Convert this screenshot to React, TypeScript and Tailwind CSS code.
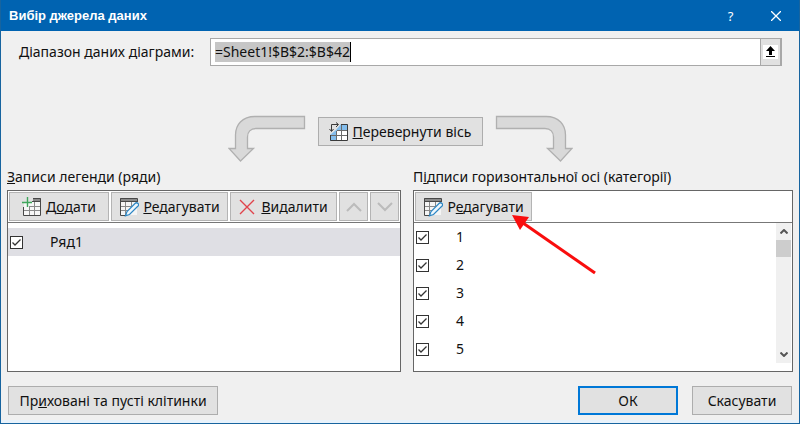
import { useEffect, useRef, type ReactNode } from "react";

const CATEGORIES = ["1", "2", "3", "4", "5"];

function DialogButton({ children, className = "", label, disabled }: { children: ReactNode; className?: string; label?: string; disabled?: boolean }) {
  return (
    <button
      type="button"
      aria-label={label}
      disabled={disabled}
      className={`flex h-[29px] shrink-0 items-center justify-center whitespace-nowrap bg-[#e1e1e1] ${className}`}
    >
      {children}
    </button>
  );
}

function CurvedArrow({ flipped = false }: { flipped?: boolean }) {
  return (
    <svg width="78" height="48" viewBox="0 0 78 48" aria-hidden="true" className={flipped ? "-scale-x-100" : ""}>
      <path
        d="M76.500 1.500H27C14 1.500 7.500 10 7.500 20V33.500H1L12.500 46L25.500 33.500H19.500V22C19.500 17 22.500 13.500 28 13.500H76.500Z"
        fill="#d9d9d9"
        stroke="#b0b0b0"
        strokeWidth="1.300"
      />
    </svg>
  );
}

function SwitchIcon() {
  return (
    <svg width="20" height="20" viewBox="0 0 20 20" aria-hidden="true">
      <path d="M12 2H19V8H8V19H1V13L7 8Z" fill="#83bdec" />
      <path d="M8 8H19V19H8Z" fill="#fff" />
      <path d="M12 2.500H18.500V18.500H1.500V13" fill="none" stroke="#3a3a3a" />
      <path d="M2 13.500H18M8 8.500H18M7.500 9V18M12.500 3V18" fill="none" stroke="#6b6b6b" />
      <path d="M2.500 9V2.500H9M0.500 7L2.500 9.500L4.500 7M7 0.500L9.500 2.500L7 5" fill="none" stroke="#3a3a3a" />
    </svg>
  );
}

function AddTableIcon() {
  return (
    <svg width="20" height="20" viewBox="0 0 20 20" aria-hidden="true">
      <path d="M2 5H19V19H2Z" fill="#f7f7f7" />
      <path d="M11 1H19V4H11Z" fill="#8a8a8a" />
      <path d="M7 9.500H18M2 13.500H18M7.500 9V18M12.500 5V18" fill="none" stroke="#8a8a8a" />
      <path d="M1.500 10V18.500H18.500V1.500H11M10 4.500H18.500" fill="none" stroke="#484848" />
      <path d="M5.500 0V10M0 5.500H10" stroke="#3fa65c" strokeWidth="1.400" />
    </svg>
  );
}

function EditTableIcon() {
  return (
    <svg width="20" height="20" viewBox="0 0 20 20" aria-hidden="true">
      <path d="M1 1H18V18H1Z" fill="#f5f5f5" />
      <path d="M1 1H18V4H1Z" fill="#8a8a8a" />
      <path d="M2 9.500H14M2 13.500H9M6.500 5V18M12.500 5V9" fill="none" stroke="#8a8a8a" />
      <path d="M8 18.500H1.500V1.500H18.500V5M1.500 4.500H18.500" fill="none" stroke="#484848" />
      <path d="M6.500 18.800L8 14.500L16 6.500Q17.500 5 19 6.500T18.500 9.500L10.500 17.500Z" fill="#eef7fd" stroke="#2c86c4" strokeWidth="1.200" />
    </svg>
  );
}

function Chevron({ down = false, className = "" }: { down?: boolean; className?: string }) {
  return (
    <svg viewBox="0 0 16 10" fill="none" stroke="currentColor" aria-hidden="true" className={className}>
      <path d={down ? "M1 1L8 8L15 1" : "M1 9L8 2L15 9"} />
    </svg>
  );
}

function SeriesItem({ text, className = "" }: { text: string; className?: string }) {
  return (
    <li>
      <label className={`flex h-7 items-center gap-[27px] pl-[2px] ${className}`}>
        <span className="grid">
          <input type="checkbox" defaultChecked className="col-start-1 row-start-1 size-[13px] appearance-none border border-[#333] bg-white" />
          <svg viewBox="0 0 13 13" aria-hidden="true" className="pointer-events-none col-start-1 row-start-1 size-[13px]">
            <path d="M2.500 6.500L5 9L10.500 3.500" fill="none" stroke="#333" strokeWidth="1.300" />
          </svg>
        </span>
        <span>{text}</span>
      </label>
    </li>
  );
}

export default function App() {
  const rangeRef = useRef<HTMLInputElement>(null);

  useEffect(() => {
    rangeRef.current?.focus();
    rangeRef.current?.select();
  }, []);

  return (
    <main className="border-x border-b border-[#17649f] bg-[#f0f0f0] font-['Noto_Sans','Segoe_UI',sans-serif] text-sm leading-5 text-[#111]">
      <header className="flex h-[31px] items-center bg-[#0063b1] pl-2 text-white">
        <h1 className="flex-1 font-['Liberation_Sans',Arial,sans-serif] text-[13px] font-bold">Вибір джерела даних</h1>
        <button type="button" aria-label="Довідка" className="w-[45px] text-[13px]">?</button>
        <button type="button" aria-label="Закрити" className="flex w-[46px] justify-center">
          <svg width="10" height="10" viewBox="0 0 10 10" stroke="white" strokeWidth="1.300" aria-hidden="true">
            <path d="M0 0L10 10M10 0L0 10" />
          </svg>
        </button>
      </header>

      <div className="flex flex-col px-[6px] pt-[7px] pb-[5px]">
        <div className="flex items-center gap-3 pr-[11px] pl-3">
          <label htmlFor="range" className="w-[179px] whitespace-nowrap"><u>Д</u>іапазон даних діаграми:</label>
          <div className="relative flex h-7 flex-1 border border-[#a8a8a8] bg-white">
            <input
              id="range"
              ref={rangeRef}
              defaultValue="=Sheet1!$B$2:$B$42"
              className="min-w-0 flex-1 pl-1 outline-none selection:bg-[#c6c6c6] selection:text-[#111]"
            />
            <span aria-hidden="true" className="pointer-events-none absolute top-[3px] left-[139px] h-5 w-px bg-black" />
            <button type="button" aria-label="Згорнути діалогове вікно" className="flex w-[21px] items-center justify-center border-x border-[#a8a8a8] bg-[#e1e1e1]">
              <svg width="15" height="14" viewBox="0 0 15 14" aria-hidden="true">
                <path d="M0 0H15V14H0Z" fill="white" />
                <path d="M7.500 1L12 6H9V10H6V6H3ZM3 11H12V12H3Z" fill="black" />
              </svg>
            </button>
          </div>
        </div>

        <div className="flex items-start justify-center gap-3 pt-[49px]">
          <CurvedArrow />
          <DialogButton className="mt-[2px] w-[165px] gap-1 border border-[#adadad]">
            <SwitchIcon />
            <span><u>П</u>еревернути вісь</span>
          </DialogButton>
          <CurvedArrow flipped />
        </div>

        <div className="grid grid-cols-[394fr_380fr] gap-3 pt-1">
          <section className="min-w-0">
            <h2 className="pb-[3px]"><u>З</u>аписи легенди (ряди)</h2>
            <div className="border border-[#666] bg-white">
              <div className="flex gap-[2px] border-b border-[#777] p-px">
                <DialogButton className="w-[100px] gap-1 border border-[#b4b4b4]"><AddTableIcon /><span>Д<u>о</u>дати</span></DialogButton>
                <DialogButton className="w-[117px] gap-1 border border-[#b4b4b4]"><EditTableIcon /><span><u>Р</u>едагувати</span></DialogButton>
                <DialogButton className="w-[107px] gap-[6px] border border-[#b4b4b4]">
                  <svg width="16" height="16" viewBox="0 0 16 16" stroke="#e0434b" strokeWidth="1.400" aria-hidden="true"><path d="M1 1L15 15M15 1L1 15" /></svg>
                  <span><u>В</u>идалити</span>
                </DialogButton>
                <DialogButton disabled label="Вгору" className="w-[29px] border border-[#b4b4b4] text-[#bbb]"><Chevron className="w-4 stroke-2" /></DialogButton>
                <DialogButton disabled label="Вниз" className="w-[29px] border border-[#b4b4b4] text-[#bbb]"><Chevron down className="w-4 stroke-2" /></DialogButton>
              </div>
              <ul className="h-[148px] pt-[5px]">
                <SeriesItem text="Ряд1" className="bg-[#dfdfe4]" />
              </ul>
            </div>
          </section>

          <section className="min-w-0">
            <h2 className="pb-[3px]">П<u>і</u>дписи горизонтальної осі (категорії)</h2>
            <div className="border border-[#666] bg-white">
              <div className="flex border-b border-[#777] p-px">
                <DialogButton className="relative w-[117px] gap-1 border border-[#b4b4b4]">
                  <EditTableIcon />
                  <span>Р<u>е</u>дагувати</span>
                  <svg width="86" height="62" viewBox="0 0 86 62" aria-hidden="true" className="pointer-events-none absolute top-[20px] left-[95px]">
                    <path d="M12 10L84 60" stroke="#f90d0d" strokeWidth="3" />
                    <path d="M1 2L18 4L9 17Z" fill="#f90d0d" />
                  </svg>
                </DialogButton>
              </div>
              <div className="flex h-[148px]">
                <ul className="flex-1">
                  {CATEGORIES.map((name) => <SeriesItem key={name} text={name} />)}
                </ul>
                <div className="mr-px flex h-[140px] w-[15px] flex-col bg-[#f0f0f0] text-[#555]">
                  <button type="button" aria-label="Прокрутити вгору" className="flex h-[17px] items-center justify-center"><Chevron className="w-2 stroke-[4]" /></button>
                  <div className="h-[17px] bg-[#cdcdcd]" />
                  <div className="flex-1" />
                  <button type="button" aria-label="Прокрутити вниз" className="flex h-[17px] items-center justify-center"><Chevron down className="w-2 stroke-[4]" /></button>
                </div>
              </div>
            </div>
          </section>
        </div>

        <footer className="flex gap-[14px] px-px pt-[14px]">
          <DialogButton className="mr-auto w-[210px] border border-[#adadad]"><span>Пр<u>и</u>ховані та пусті клітинки</span></DialogButton>
          <DialogButton className="w-[100px] border-2 border-[#0078d7]">ОК</DialogButton>
          <DialogButton className="w-[100px] border border-[#adadad]">Скасувати</DialogButton>
        </footer>
      </div>
      <div className="h-[3px] bg-[#e8f2fb]" />
    </main>
  );
}
